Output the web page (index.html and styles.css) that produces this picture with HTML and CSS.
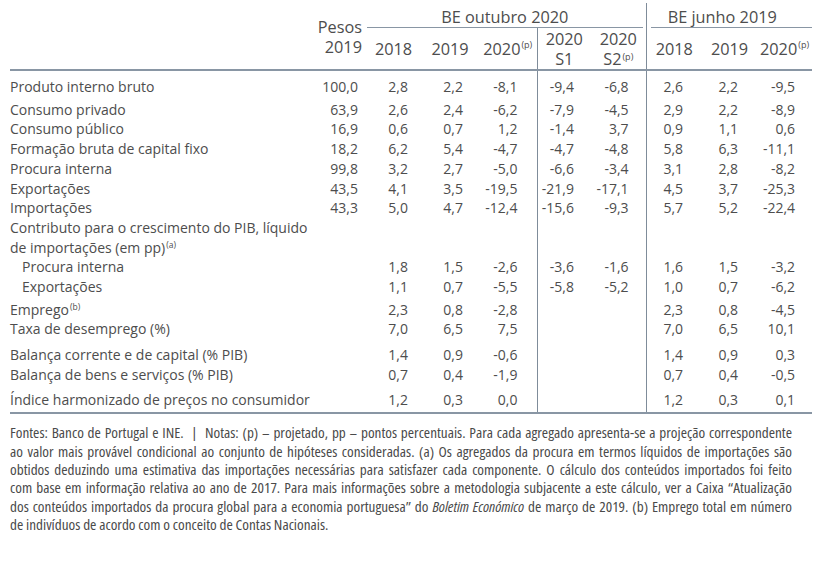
FILE: index.html
```html
<!DOCTYPE html>
<html lang="pt">
<head>
<meta charset="utf-8">
<title>Projeções</title>
<link rel="stylesheet" href="styles.css">
</head>
<body>
<div class="page">
  <table class="proj">
    <colgroup>
      <col class="c-lbl"><col class="c-pes"><col class="c-a"><col class="c-b"><col class="c-c"><col class="c-d"><col class="c-e"><col class="c-f"><col class="c-g"><col class="c-h">
    </colgroup>
    <thead>
      <tr class="hr1">
        <th class="lbl" rowspan="2"></th>
        <th class="pesos" rowspan="2">Pesos<br>2019</th>
        <th class="grp oct" colspan="5"><div class="grp-in">BE outubro 2020</div></th>
        <th class="grp jun vl" colspan="3"><div class="grp-in">BE junho 2019</div></th>
      </tr>
      <tr class="hr2">
        <th>2018</th>
        <th>2019</th>
        <th>2020<sup>(p)</sup></th>
        <th class="vl">2020<br>S1</th>
        <th>2020<br>S2<sup class="low">(p)</sup></th>
        <th class="vl">2018</th>
        <th>2019</th>
        <th>2020<sup>(p)</sup></th>
      </tr>
    </thead>
    <tbody>
      <tr class="first"><td>Produto interno bruto</td><td>100,0</td><td>2,8</td><td>2,2</td><td>-8,1</td><td>-9,4</td><td>-6,8</td><td>2,6</td><td>2,2</td><td>-9,5</td></tr>
      <tr><td>Consumo privado</td><td>63,9</td><td>2,6</td><td>2,4</td><td>-6,2</td><td>-7,9</td><td>-4,5</td><td>2,9</td><td>2,2</td><td>-8,9</td></tr>
      <tr><td>Consumo público</td><td>16,9</td><td>0,6</td><td>0,7</td><td>1,2</td><td>-1,4</td><td>3,7</td><td>0,9</td><td>1,1</td><td>0,6</td></tr>
      <tr><td>Formação bruta de capital fixo</td><td>18,2</td><td>6,2</td><td>5,4</td><td>-4,7</td><td>-4,7</td><td>-4,8</td><td>5,8</td><td>6,3</td><td>-11,1</td></tr>
      <tr><td>Procura interna</td><td>99,8</td><td>3,2</td><td>2,7</td><td>-5,0</td><td>-6,6</td><td>-3,4</td><td>3,1</td><td>2,8</td><td>-8,2</td></tr>
      <tr><td>Exportações</td><td>43,5</td><td>4,1</td><td>3,5</td><td>-19,5</td><td>-21,9</td><td>-17,1</td><td>4,5</td><td>3,7</td><td>-25,3</td></tr>
      <tr><td>Importações</td><td>43,3</td><td>5,0</td><td>4,7</td><td>-12,4</td><td>-15,6</td><td>-9,3</td><td>5,7</td><td>5,2</td><td>-22,4</td></tr>
      <tr><td>Contributo para o crescimento do PIB, líquido<br>de importações (em pp)<sup>(a)</sup></td><td></td><td></td><td></td><td></td><td></td><td></td><td></td><td></td><td></td></tr>
      <tr><td class="ind">Procura interna</td><td></td><td>1,8</td><td>1,5</td><td>-2,6</td><td>-3,6</td><td>-1,6</td><td>1,6</td><td>1,5</td><td>-3,2</td></tr>
      <tr><td class="ind">Exportações</td><td></td><td>1,1</td><td>0,7</td><td>-5,5</td><td>-5,8</td><td>-5,2</td><td>1,0</td><td>0,7</td><td>-6,2</td></tr>
      <tr class="gap-s"><td>Emprego<sup>(b)</sup></td><td></td><td>2,3</td><td>0,8</td><td>-2,8</td><td></td><td></td><td>2,3</td><td>0,8</td><td>-4,5</td></tr>
      <tr><td>Taxa de desemprego (%)</td><td></td><td>7,0</td><td>6,5</td><td>7,5</td><td></td><td></td><td>7,0</td><td>6,5</td><td>10,1</td></tr>
      <tr class="gap-l"><td>Balança corrente e de capital (% PIB)</td><td></td><td>1,4</td><td>0,9</td><td>-0,6</td><td></td><td></td><td>1,4</td><td>0,9</td><td>0,3</td></tr>
      <tr><td>Balança de bens e serviços (% PIB)</td><td></td><td>0,7</td><td>0,4</td><td>-1,9</td><td></td><td></td><td>0,7</td><td>0,4</td><td>-0,5</td></tr>
      <tr class="gap-l last"><td>Índice harmonizado de preços no consumidor</td><td></td><td>1,2</td><td>0,3</td><td>0,0</td><td></td><td></td><td>1,2</td><td>0,3</td><td>0,1</td></tr>
    </tbody>
  </table>
  <div class="notes">
    <span class="ln">Fontes: Banco de Portugal e INE. &nbsp;|&nbsp; Notas: (p) – projetado, pp – pontos percentuais. Para cada agregado apresenta-se a projeção correspondente</span>
    <span class="ln">ao valor mais provável condicional ao conjunto de hipóteses consideradas. (a) Os agregados da procura em termos líquidos de importações são</span>
    <span class="ln">obtidos deduzindo uma estimativa das importações necessárias para satisfazer cada componente. O cálculo dos conteúdos importados foi feito</span>
    <span class="ln">com base em informação relativa ao ano de 2017. Para mais informações sobre a metodologia subjacente a este cálculo, ver a Caixa “Atualização</span>
    <span class="ln">dos conteúdos importados da procura global para a economia portuguesa” do <em>Boletim Económico</em> de março de 2019. (b) Emprego total em número</span>
    <span class="ln last">de indivíduos de acordo com o conceito de Contas Nacionais.</span>
  </div>
</div>
</body>
</html>
```

FILE: styles.css
```css
html, body {
  margin: 0;
  padding: 0;
  background: #ffffff;
}

.page {
  padding: 3px 0 0 10px;
  width: 802px;
  color: #4d4d4d;
  font-family: "Open Sans", "DejaVu Sans", sans-serif;
}

.proj {
  table-layout: fixed;
  border-collapse: collapse;
  width: 802px;
}

.c-lbl { width: 290px; }
.c-pes { width: 66px; }
.c-a { width: 55px; }
.c-b { width: 58px; }
.c-c { width: 58px; }
.c-d { width: 54px; }
.c-e { width: 55px; }
.c-f { width: 56px; }
.c-g { width: 55px; }
.c-h { width: 55px; }

.proj th {
  font-weight: 400;
  font-size: 16.3px;
  line-height: 20px;
  padding: 0;
  text-align: center;
  vertical-align: middle;
  white-space: nowrap;
}

.proj sup {
  font-size: 8.5px;
  line-height: 0;
  vertical-align: 6px;
  margin-left: 1px;
}

.proj th sup {
  font-size: 9px;
  vertical-align: 7px;
}

.proj th sup.low {
  vertical-align: 5px;
}

.proj td sup {
  vertical-align: 5px;
}

.hr1 th.grp {
  padding-top: 4px;
  vertical-align: bottom;
}

.grp-in {
  border-bottom: 1px solid #8996a4;
}

.oct .grp-in {
  margin: 0 3px 0 1px;
}

.jun .grp-in {
  margin-left: 4px;
  padding-right: 18px;
}

.hr2 th {
  height: 41px;
}

.hr2 th,
.proj th.lbl,
.proj th.pesos {
  border-bottom: 2px solid #8996a4;
}

.proj th.pesos {
  text-align: right;
  vertical-align: bottom;
  padding: 0 4px 12px 0;
}

.proj .vl {
  border-left: 1.5px solid #7f8c9a;
}

.proj td {
  font-size: 14px;
  line-height: 19.7px;
  padding: 0;
  text-align: right;
  white-space: nowrap;
  vertical-align: top;
}

.proj td:first-child {
  text-align: left;
}

.proj td.ind {
  padding-left: 12px;
}

.proj td:nth-child(2) { padding-right: 8px; }
.proj td:nth-child(3) { padding-right: 13px; }
.proj td:nth-child(4) { padding-right: 16px; }
.proj td:nth-child(5) { padding-right: 19px; }
.proj td:nth-child(6) { padding-right: 17px; border-left: 1.5px solid #7f8c9a; }
.proj td:nth-child(7) { padding-right: 17px; }
.proj td:nth-child(8) { padding-right: 19px; border-left: 1.5px solid #7f8c9a; }
.proj td:nth-child(9) { padding-right: 19px; }
.proj td:nth-child(10) { padding-right: 17px; }

.proj tr.first td {
  padding-top: 6px;
  padding-bottom: 3px;
}

.proj tr.gap-s td {
  padding-top: 3px;
}

.proj tr.gap-l td {
  padding-top: 6px;
}

.proj tr.last td {
  padding-top: 5px;
  padding-bottom: 3px;
  border-bottom: 2px solid #8996a4;
}

.notes {
  margin-top: 9px;
  width: 782px;
  font-family: "Open Sans", "DejaVu Sans", sans-serif;
  font-stretch: 78%;
  font-size: 15.2px;
  line-height: 18.4px;
  color: #4a4a4a;
}

.notes .ln {
  display: block;
  white-space: nowrap;
  text-align: justify;
  text-align-last: justify;
}

.notes .ln.last {
  text-align-last: left;
}

.notes em {
  font-style: italic;
}
```
